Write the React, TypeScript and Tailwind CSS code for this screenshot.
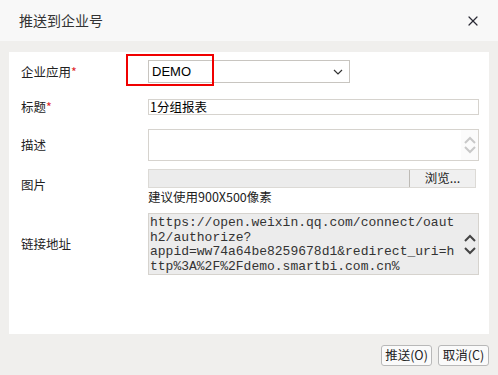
import { X } from "lucide-react";

const cjk = { fontFamily: '"Microsoft YaHei", "Noto Sans CJK SC", "Liberation Sans", sans-serif' };
const mono = { fontFamily: '"Courier New", "Liberation Mono", monospace' };

function Up({ color }: { color: string }) {
  return (
    <svg width="14" height="10" viewBox="0 0 14 10" fill="none">
      <path d="M2 8 L7 3 L12 8" stroke={color} strokeWidth="2" />
    </svg>
  );
}

function Down({ color }: { color: string }) {
  return (
    <svg width="14" height="10" viewBox="0 0 14 10" fill="none">
      <path d="M2 2 L7 7 L12 2" stroke={color} strokeWidth="2" />
    </svg>
  );
}

function Label({ text, required }: { text: string; required?: boolean }) {
  return (
    <div className="w-[127px] shrink-0 text-[12.5px] leading-[16px] text-[#222]">
      {text}
      {required ? <span className="text-[#e0262a]">*</span> : null}
    </div>
  );
}

export default function App() {
  return (
    <div className="flex h-[375px] w-[498px] flex-col bg-[#f0efed]" style={cjk}>
      <div className="flex h-[41px] items-center justify-between bg-[#f8f8f8] pl-[19px] pr-[17px]">
        <span className="text-[14px] text-[#333]">推送到企业号</span>
        <X size={16} strokeWidth={1.8} className="text-[#2a2a35]" />
      </div>

      <div className="relative mx-[9px] mt-[11px] h-[282px] bg-white pl-[12px] pr-[10px] pt-[8px]">
        <div className="absolute left-[117px] top-[2px] h-[32px] w-[88px] border-2 border-[#f00000]" />

        <div className="flex items-center">
          <Label text="企业应用" required />
          <div className="flex h-[23px] w-[202px] items-center justify-between border border-[#c8c5c0] pl-[3px] pr-[6px]">
            <span className="text-[13px] text-black" style={{ fontFamily: '"Liberation Sans", Arial, sans-serif' }}>DEMO</span>
            <svg width="10" height="6" viewBox="0 0 10 6" fill="none">
              <path d="M1 1 L5 5 L9 1" stroke="#333" strokeWidth="1.2" />
            </svg>
          </div>
        </div>

        <div className="mt-[16px] flex h-[16px] items-center">
          <Label text="标题" required />
          <div className="flex h-[16px] flex-1 items-center border border-[#d6d3ce] pl-[1px] text-[12.5px] leading-none text-black">
            1分组报表
          </div>
        </div>

        <div className="mt-[14px] flex items-center">
          <Label text="描述" />
          <div className="flex h-[32px] flex-1 justify-end border border-[#d6d3ce]">
            <div className="flex w-[17px] flex-col items-center justify-center bg-[#fbfbfb]">
              <Up color="#c8c8c8" />
              <Down color="#c8c8c8" />
            </div>
          </div>
        </div>

        <div className="mt-[8px] flex">
          <div className="pt-[8px]"><Label text="图片" /></div>
          <div className="flex-1">
            <div className="flex h-[19px] w-[328px] justify-end border border-[#dcdad6] bg-[#ececec]">
              <div className="flex w-[66px] items-center justify-center border-l border-[#bdbab5] bg-[#f0f0f0] text-[12.5px] leading-none text-[#222]">
                浏览...
              </div>
            </div>
            <div className="h-[17px] text-[12.5px] leading-[17px] text-[#222]">建议使用900X500像素</div>
          </div>
        </div>

        <div className="mt-[8px] flex items-center">
          <Label text="链接地址" />
          <div className="flex h-[62px] flex-1 border border-[#d6d3ce] bg-[#ececec]">
            <div className="flex-1 overflow-hidden whitespace-pre pl-[1px] pt-[2px] text-[13px] leading-[14.5px] text-[#333]" style={mono}>
              {"https://open.weixin.qq.com/connect/oaut\nh2/authorize?\nappid=ww74a64be8259678d1&redirect_uri=h\nttp%3A%2F%2Fdemo.smartbi.com.cn%"}
            </div>
            <div className="flex w-[17px] flex-col items-center justify-center gap-[3px]">
              <Up color="#444" />
              <Down color="#444" />
            </div>
          </div>
        </div>
      </div>

      <div className="flex justify-end gap-[6px] pr-[9px] pt-[11px]">
        <button className="h-[21px] w-[51px] rounded-[3px] border border-[#b8b8b8] bg-[#fafafa] text-[12.5px] leading-none text-[#222]">推送(O)</button>
        <button className="h-[21px] w-[51px] rounded-[3px] border border-[#b8b8b8] bg-[#fafafa] text-[12.5px] leading-none text-[#222]">取消(C)</button>
      </div>
    </div>
  );
}
